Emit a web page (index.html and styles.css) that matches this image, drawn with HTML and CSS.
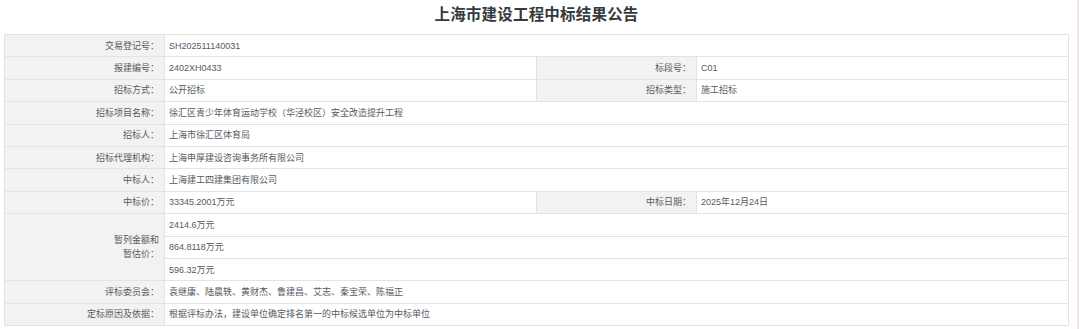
FILE: index.html
```html
<!DOCTYPE html>
<html lang="zh-CN">
<head>
<meta charset="utf-8">
<title>上海市建设工程中标结果公告</title>
<link rel="stylesheet" href="styles.css">
</head>
<body>
<div class="page">
  <h1 class="title">上海市建设工程中标结果公告</h1>
  <table class="info">
    <colgroup>
      <col class="c-label"><col class="c-value"><col class="c-label"><col class="c-value">
    </colgroup>
    <tr><th>交易登记号：</th><td colspan="3">SH202511140031</td></tr>
    <tr><th>报建编号：</th><td>2402XH0433</td><th>标段号：</th><td>C01</td></tr>
    <tr><th>招标方式：</th><td>公开招标</td><th>招标类型：</th><td>施工招标</td></tr>
    <tr><th>招标项目名称：</th><td colspan="3">徐汇区青少年体育运动学校（华泾校区）安全改造提升工程</td></tr>
    <tr><th>招标人：</th><td colspan="3">上海市徐汇区体育局</td></tr>
    <tr><th>招标代理机构：</th><td colspan="3">上海申厚建设咨询事务所有限公司</td></tr>
    <tr><th>中标人：</th><td colspan="3">上海建工四建集团有限公司</td></tr>
    <tr><th>中标价：</th><td>33345.2001万元</td><th>中标日期：</th><td>2025年12月24日</td></tr>
    <tr><th rowspan="3" class="multi">暂列金额和<br>暂估价：</th><td colspan="3">2414.6万元</td></tr>
    <tr><td colspan="3">864.8118万元</td></tr>
    <tr><td colspan="3">596.32万元</td></tr>
    <tr><th>评标委员会：</th><td colspan="3">袁继康、陆晨轶、黄财杰、鲁建昌、艾志、秦宝荣、陈福正</td></tr>
    <tr><th>定标原因及依据：</th><td colspan="3">根据评标办法，建设单位确定排名第一的中标候选单位为中标单位</td></tr>
  </table>
</div>
<div class="scroll-edge"></div>
</body>
</html>
```

FILE: styles.css
```css
html, body {
  margin: 0;
  padding: 0;
  background: #ffffff;
}
body {
  font-family: "Liberation Sans", "Noto Sans CJK SC", sans-serif;
  width: 1080px;
  height: 329px;
  overflow: hidden;
  position: relative;
}
.page {
  padding: 0 11px 0 4px;
}
.title {
  margin: 0;
  height: 34px;
  line-height: 30px;
  text-align: center;
  font-size: 15.5px;
  font-weight: bold;
  color: #333a40;
  letter-spacing: 0.2px;
}
.info {
  width: 1065px;
  border-collapse: collapse;
  table-layout: fixed;
  font-size: 9px;
}
.c-label { width: 160px; }
.c-value { width: 372px; }
.info tr { height: 22.4px; }
.info th, .info td {
  border: 1px solid #e3e3e3;
  padding: 0;
  white-space: nowrap;
  vertical-align: middle;
  line-height: 14px;
}
.info th {
  background: #f2f2f2;
  color: #555a5f;
  font-weight: normal;
  text-align: right;
  padding-right: 5px;
}
.info td {
  color: #555a5f;
  text-align: left;
  padding-left: 4px;
}
.info th.multi {
  line-height: 14px;
}
.scroll-edge {
  position: absolute;
  top: 0;
  right: 1px;
  width: 2px;
  height: 329px;
  background: #efe9e7;
}
```
